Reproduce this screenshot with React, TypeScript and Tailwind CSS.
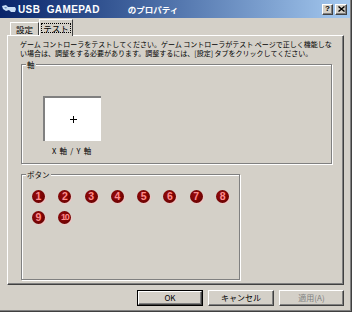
const jp = { fontFamily: '"Noto Sans CJK JP", "Liberation Sans", sans-serif' }

function Raised({ className = '', children }: { className?: string; children?: React.ReactNode }) {
  return (
    <div
      className={`flex items-center justify-center border-t border-l border-white border-r border-b border-r-[#404040] border-b-[#404040] bg-[#d4d0c8] shadow-[inset_-1px_-1px_0_#808080] ${className}`}
    >
      {children}
    </div>
  )
}

function Group({ label, className = '', children }: { label: string; className?: string; children?: React.ReactNode }) {
  return (
    <div className={`relative border border-[#808080] shadow-[inset_1px_1px_0_#ffffff,1px_1px_0_#ffffff] ${className}`}>
      <span className="absolute left-[4px] top-[-5px] bg-[#d4d0c8] px-[1px] text-[7.5px] leading-[9px] text-black">
        {label}
      </span>
      {children}
    </div>
  )
}

function Dot({ n }: { n: number }) {
  return (
    <div className="flex h-[13px] w-[13px] items-center justify-center rounded-full bg-[radial-gradient(circle_at_40%_40%,#9a0a0a,#5a0000)] shadow-[1px_1px_0_#f2c4c4]">
      <span
        className={`font-bold leading-none text-[#ff8c8c] ${n > 9 ? 'text-[9px] tracking-[-1.2px]' : 'text-[10.5px]'}`}
        style={{ fontFamily: '"Liberation Sans", sans-serif' }}
      >
        {n}
      </span>
    </div>
  )
}

export default function App() {
  return (
    <div className="h-[312px] w-[352px] border-r border-b border-[#404040] bg-[#d4d0c8]" style={jp}>
      <div className="flex h-full flex-col border-r border-b border-[#808080]">
        {/* Title bar */}
        <div className="flex h-[18px] items-center bg-gradient-to-r from-[#0a246a] to-[#a6caf0] pl-[2px] pr-[3px]">
          <svg width="14" height="10" viewBox="0 0 14 10" className="mr-[2px]">
            <path d="M0 2 L4 1 L6 3 L13 3 L14 5 L13 8 L9 8 L7 6 L4 7 L1 5 Z" fill="#c8dcf4" />
            <path d="M2 3 L5 3 L4 5 Z" fill="#6f8fbf" />
          </svg>
          <span
            className="whitespace-pre text-[10px] font-bold tracking-[0.4px] text-white"
            style={{ fontFamily: '"Liberation Sans", sans-serif' }}
          >
            USB  GAMEPAD
          </span>
          <span className="ml-[28px] text-[8.5px] font-bold text-white">のプロパティ</span>
          <div className="ml-auto flex items-center gap-[2px]">
            <Raised className="h-[11px] w-[11px] text-[8px] font-bold leading-none">
              <span style={{ fontFamily: '"Liberation Sans", sans-serif' }}>?</span>
            </Raised>
            <Raised className="h-[11px] w-[12px]">
              <svg width="7" height="6" viewBox="0 0 7 6">
                <path d="M0.5 0.5 L6.5 5.5 M6.5 0.5 L0.5 5.5" stroke="#000" strokeWidth="1.4" />
              </svg>
            </Raised>
          </div>
        </div>

        {/* Tabs */}
        <div className="ml-[10px] mt-[1px] flex h-[16px] items-end">
          <div className="flex h-[13px] w-[29px] items-center justify-center border-t border-l border-white border-r border-r-[#404040] text-[8.5px] leading-none text-black">
            設定
          </div>
          <div className="relative z-10 mb-[-1px] flex h-[17px] w-[34px] items-center justify-center border-t border-l border-white border-r border-r-[#404040] bg-[#d4d0c8] text-[8.5px] leading-none text-black">
            <span className="outline outline-1 outline-dotted outline-black px-[1px]">テスト</span>
          </div>
        </div>

        {/* Tab panel */}
        <div className="ml-[7px] h-[250px] w-[337px] border-t border-l border-white border-r border-b border-r-[#404040] border-b-[#404040] shadow-[inset_-1px_-1px_0_#808080]">
          <p className="pl-[12px] pt-[4px] text-[7px] leading-[9px] text-black">
            ゲーム コントローラをテストしてください。ゲーム コントローラがテスト ページで正しく機能しな
            <br />
            い場合は、調整をする必要があります。調整するには、[設定] タブをクリックしてください。
          </p>

          <Group label="軸" className="ml-[13px] mt-[6px] h-[100px] w-[311px]">
            <div className="ml-[21px] mt-[31px] flex w-[58px] flex-col items-center">
              <div className="flex h-[45px] w-[58px] items-center justify-center border-t-2 border-l-2 border-[#808080] bg-white">
                <svg width="7" height="7" viewBox="0 0 7 7">
                  <path d="M3.5 0 V7 M0 3.5 H7" stroke="#000" strokeWidth="1" />
                </svg>
              </div>
              <span className="mt-[5px] whitespace-pre text-[7.5px] leading-[10px] tracking-[0.8px] text-black">X 軸 / Y 軸</span>
            </div>
          </Group>

          <Group label="ボタン" className="ml-[13px] mt-[10px] h-[106px] w-[219px]">
            <div className="ml-[10px] mt-[15px] grid grid-cols-[repeat(8,13px)] gap-x-[13.3px] gap-y-[8px]">
              {[1, 2, 3, 4, 5, 6, 7, 8, 9, 10].map(n => (
                <Dot key={n} n={n} />
              ))}
            </div>
          </Group>
        </div>

        {/* Buttons */}
        <div className="mt-[5px] flex justify-end gap-[5px] pr-[6px]">
          <div className="border border-black">
            <Raised className="h-[14px] w-[64px] text-[8px] text-black">OK</Raised>
          </div>
          <Raised className="h-[16px] w-[66px] text-[8px] text-black">キャンセル</Raised>
          <Raised className="h-[16px] w-[65px] text-[8px] text-[#808080]">適用(A)</Raised>
        </div>
      </div>
    </div>
  )
}
